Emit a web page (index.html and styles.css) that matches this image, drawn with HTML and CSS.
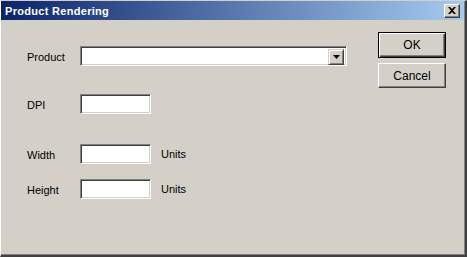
FILE: index.html
```html
<!DOCTYPE html>
<html>
<head>
<meta charset="utf-8">
<link rel="stylesheet" href="styles.css">
</head>
<body>
<div class="window">
  <div class="titlebar">
    <span class="title">Product Rendering</span>
    <span class="close"><svg width="8" height="7" viewBox="0 0 8 7"><path d="M0 0h2l2 2 2-2h2L5 3.5 8 7H6L4 5 2 7H0l3-3.5z" fill="#000"/></svg></span>
  </div>
  <div class="content">
    <div class="form">
      <div class="row r-product">
        <span class="label">Product</span>
        <div class="field combo">
          <span class="drop"><svg width="7" height="4" viewBox="0 0 7 4"><path d="M0 0h7L3.5 4z" fill="#000"/></svg></span>
        </div>
      </div>
      <div class="row r-dpi">
        <span class="label">DPI</span>
        <div class="field small"></div>
      </div>
      <div class="row r-width">
        <span class="label">Width</span>
        <div class="field small"></div>
        <span class="units">Units</span>
      </div>
      <div class="row r-height">
        <span class="label">Height</span>
        <div class="field small"></div>
        <span class="units">Units</span>
      </div>
    </div>
    <div class="buttons">
      <button class="btn default"><span>OK</span></button>
      <button class="btn"><span>Cancel</span></button>
    </div>
  </div>
</div>
</body>
</html>
```
FILE: styles.css
```css
html, body {
  margin: 0;
  padding: 0;
  background: #d4d0c8;
}
body {
  width: 467px;
  height: 257px;
  overflow: hidden;
  font-family: "Liberation Sans", Arial, sans-serif;
  font-size: 11px;
  color: #000;
}
.window {
  box-sizing: border-box;
  width: 467px;
  height: 257px;
  background: #d4d0c8;
  border-left: 1px solid #ffffff;
  border-top: 1px solid #d4d0c8;
  border-right: 2px solid #404040;
  border-bottom: 2px solid #404040;
  box-shadow: inset -1px -1px 0 #808080;
  display: flex;
  flex-direction: column;
}
.titlebar {
  height: 19px;
  margin: 0 1px 0 0;
  background: linear-gradient(to right, #0a246a, #a6caf0);
  display: flex;
  align-items: center;
  padding: 0 3px 0 4px;
}
.title {
  color: #fff;
  font-weight: bold;
  font-size: 11px;
  flex: 1;
  letter-spacing: 0.3px;
}
.close {
  box-sizing: border-box;
  width: 16px;
  height: 14px;
  background: #d4d0c8;
  border-top: 1px solid #fff;
  border-left: 1px solid #fff;
  border-right: 1px solid #404040;
  border-bottom: 1px solid #404040;
  box-shadow: inset -1px -1px 0 #808080;
  display: flex;
  align-items: center;
  justify-content: center;
  margin-right: 1px;
}
.content {
  flex: 1;
  display: flex;
}
.form {
  padding: 26px 0 0 26px;
  width: 345px;
}
.row {
  display: flex;
  align-items: center;
  height: 20px;
}
.r-dpi { margin-top: 28px; }
.r-width { margin-top: 30px; }
.r-height { margin-top: 15px; }
.label {
  width: 53px;
  position: relative;
  top: 1px;
}
.field {
  box-sizing: border-box;
  height: 20px;
  background: #fff;
  border-top: 1px solid #808080;
  border-left: 1px solid #808080;
  border-right: 1px solid #fff;
  border-bottom: 1px solid #fff;
  box-shadow: inset 1px 1px 0 #404040, inset -1px -1px 0 #d4d0c8;
}
.small { width: 71px; }
.combo {
  width: 267px;
  display: flex;
  justify-content: flex-end;
  padding: 2px;
}
.drop {
  box-sizing: border-box;
  width: 16px;
  height: 16px;
  background: #d4d0c8;
  border-top: 1px solid #d4d0c8;
  border-left: 1px solid #d4d0c8;
  border-right: 1px solid #404040;
  border-bottom: 1px solid #404040;
  box-shadow: inset 1px 1px 0 #fff, inset -1px -1px 0 #808080;
  display: flex;
  align-items: center;
  justify-content: center;
}
.units {
  margin-left: 10px;
}
.buttons {
  display: flex;
  flex-direction: column;
  padding-top: 12px;
  margin-left: 6px;
  gap: 5px;
}
.btn {
  box-sizing: border-box;
  width: 68px;
  height: 25px;
  padding: 0;
  margin: 0;
  font-family: "Liberation Sans", Arial, sans-serif;
  font-size: 12px;
  color: #000;
  background: #d4d0c8;
  border-top: 1px solid #fff;
  border-left: 1px solid #fff;
  border-right: 1px solid #404040;
  border-bottom: 1px solid #404040;
  box-shadow: inset -1px -1px 0 #808080;
}
.btn.default {
  height: 26px;
  border: 1px solid #000;
  box-shadow: inset 1px 1px 0 #fff, inset -1px -1px 0 #404040, inset -2px -2px 0 #808080;
}
```
